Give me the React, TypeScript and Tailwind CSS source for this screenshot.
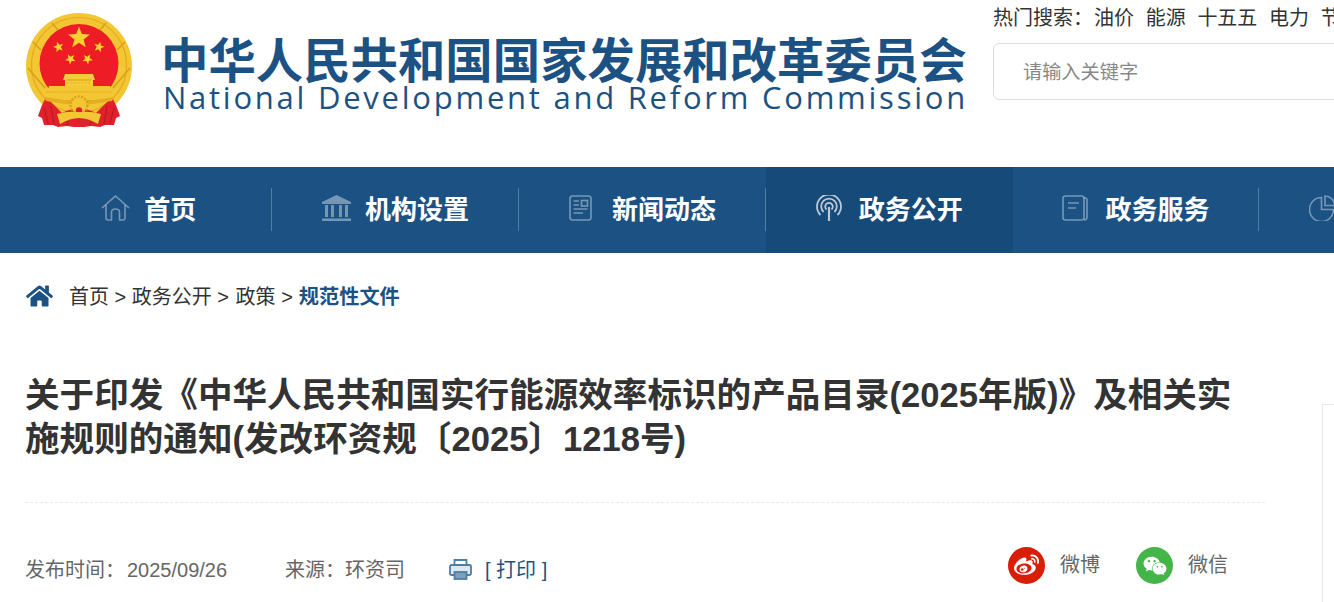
import { FaHome, FaWeibo, FaWeixin } from "react-icons/fa";

const zh = { fontFamily: '"Liberation Sans", "Noto Sans CJK SC", sans-serif' };

// 国徽, drawn in page coordinates
function star(cx: number, cy: number, r: number, rot = 0) {
  const pts: string[] = [];
  for (let i = 0; i < 10; i++) {
    const a = ((-90 + rot + i * 36) * Math.PI) / 180;
    const rr = i % 2 === 0 ? r : r * 0.42;
    pts.push(`${(cx + rr * Math.cos(a)).toFixed(2)},${(cy + rr * Math.sin(a)).toFixed(2)}`);
  }
  return pts.join(" ");
}

function Emblem() {
  return (
    <svg viewBox="26 13 108 116" className="w-[108px] h-[116px] shrink-0">
      <circle cx="79" cy="66" r="53" fill="#f3c633" />
      <circle cx="79" cy="65" r="47.5" fill="none" stroke="#e3a921" strokeWidth="1.2" />
      <path d="M28 68 L45 88 M130 68 L113 88 M33 42 L41 50 M125 42 L117 50 M52 23 L58 30 M106 23 L100 30" stroke="#dc9f1c" strokeWidth="1.6" fill="none" />
      <circle cx="79" cy="63.5" r="39.5" fill="#ee1c25" />
      {/* 绶带 */}
      <path d="M46 97 Q41 106 38 116 L42 118 L44 125 L53 125 L58 127 L67 126 L74 127 L84 127 L91 126 L100 127 L105 125 L114 125 L116 118 L120 116 Q117 106 112 97 L96 113 Q79 104 62 113 Z" fill="#e0202a" />
      <path d="M44 108 L48 123 M51 106 L54 124 M114 108 L110 123 M107 106 L104 124 M66 117 L68 125 M92 117 L90 125" stroke="#b01520" strokeWidth="0.9" fill="none" />
      <polygon points={star(79, 38, 11.5)} fill="#f8d22e" />
      <polygon points={star(58.5, 47, 5.5, -15)} fill="#f8d22e" />
      <polygon points={star(99, 47, 5.5, 15)} fill="#f8d22e" />
      <polygon points={star(70.5, 59, 5.5, -30)} fill="#f8d22e" />
      <polygon points={star(87.5, 59, 5.5, 30)} fill="#f8d22e" />
      {/* 天安门 */}
      <path d="M65 74 L93 74 L95 80 L93 80 L93 86 L65 86 L65 80 L63 80 Z" fill="#f6cb3a" />
      <path d="M67 80 H91" stroke="#dc9a18" strokeWidth="1" />
      <path d="M67 83 H91" stroke="#dc9a18" strokeWidth="0.6" strokeDasharray="2 1.5" />
      <path d="M49 86 H110 L112 98 Q79 104 46 98 Z" fill="#f3c633" />
      <path d="M46 92 H112" stroke="#e3a921" strokeWidth="0.8" />
      <path d="M44 97 Q79 104 114 97 L112 101 Q79 108 46 101 Z" fill="#e6ad22" />
      {/* 齿轮 */}
      <circle cx="79" cy="105" r="8.5" fill="#f3c633" stroke="#dc9f1c" strokeDasharray="2 1.5" strokeWidth="2.4" />
      <circle cx="79" cy="110.5" r="3.2" fill="#e0202a" />
      <path d="M57 114 Q68 111 75 112 L83 112 Q90 111 101 114 L98 124 Q88 118 79 118 Q70 118 60 124 Z" fill="#f3c633" />
    </svg>
  );
}

function HomeOutline() {
  return (
    <svg viewBox="0 0 29 26" className="w-[29px] h-[26px]" fill="none" stroke="currentColor" strokeWidth="1.6">
      <path d="M1 13 L14.5 1 L28 13" />
      <path d="M5 10 V23 Q5 25 7 25 H10.5 V17 Q10.5 14 14.5 14 Q18.5 14 18.5 17 V25 H22 Q24 25 24 23 V10" />
    </svg>
  );
}

function BankIcon() {
  return (
    <svg viewBox="0 0 29 26" className="w-[29px] h-[26px]" fill="currentColor">
      <path d="M14.5 0 L29 7 V9 H0 V7 Z" />
      <rect x="3" y="10" width="3" height="12" />
      <rect x="9" y="10" width="3" height="12" />
      <rect x="17" y="10" width="3" height="12" />
      <rect x="23" y="10" width="3" height="12" />
      <rect x="0" y="23.5" width="29" height="2.5" />
    </svg>
  );
}

function NewsIcon() {
  return (
    <svg viewBox="0 0 23 26" className="w-[23px] h-[26px]" fill="none" stroke="currentColor" strokeWidth="1.6">
      <rect x="1" y="1" width="21" height="24" rx="2.5" />
      <path d="M4.5 6 H10 M4.5 10 H10 M4.5 14 H18.5 M4.5 18 H14" />
      <rect x="12.5" y="5.5" width="6" height="5.5" />
    </svg>
  );
}

function SignalIcon() {
  return (
    <svg viewBox="0 0 26 26" className="w-[26px] h-[26px]" fill="none" stroke="currentColor" strokeWidth="1.8">
      <path d="M4.5 20 A12 12 0 1 1 21.5 20" />
      <path d="M7.6 17 A7.8 7.8 0 1 1 18.4 17" />
      <path d="M10.5 14.5 A3.8 3.8 0 1 1 15.5 14.5" />
      <path d="M13 12 V26" strokeWidth="2.2" />
    </svg>
  );
}

function ServiceIcon() {
  return (
    <svg viewBox="0 0 26 26" className="w-[26px] h-[26px]" fill="none" stroke="currentColor" strokeWidth="1.6">
      <rect x="1" y="1" width="21" height="24" rx="2.5" />
      <path d="M22 3 H23 Q25 3 25 5 V22 Q25 25 22 25" />
      <path d="M6 8 H17 M6 13 H14" />
    </svg>
  );
}

function PieIcon() {
  return (
    <svg viewBox="0 0 26 26" className="w-[26px] h-[26px]" fill="none" stroke="currentColor" strokeWidth="1.6">
      <path d="M12.5 2.5 A12 12 0 1 0 24.5 14.5 H12.5 Z" />
      <path d="M16 1 A9.5 9.5 0 0 1 25.5 10.5 H16 Z" />
    </svg>
  );
}

const navItems = [
  { label: "首页", icon: <HomeOutline />, gap: "gap-[14px]" },
  { label: "机构设置", icon: <BankIcon />, gap: "gap-[14px]" },
  { label: "新闻动态", icon: <NewsIcon />, gap: "gap-[20px]" },
  { label: "政务公开", icon: <SignalIcon />, gap: "gap-[17px]", active: true },
  { label: "政务服务", icon: <ServiceIcon />, gap: "gap-[17px]" },
  { label: "互动交流", icon: <PieIcon />, gap: "gap-[17px]" },
];

export default function App() {
  return (
    <div className="w-[1334px] h-[602px] overflow-hidden bg-white text-[#333]" style={zh}>
      {/* 头部 */}
      <header className="flex h-[167px] pl-[26px]">
        <div className="pt-[13px]">
          <Emblem />
        </div>
        <div className="ml-[27px] pt-[32px] w-[832px] shrink-0 text-[#1c5283]">
          <div className="text-[47.4px] leading-[52px] font-bold whitespace-nowrap" style={{ fontFamily: '"Noto Sans CJK SC", sans-serif' }}>
            中华人民共和国国家发展和改革委员会
          </div>
          <div className="pl-[2px] text-[31px] leading-[26px] tracking-[2.75px] whitespace-nowrap" style={{ fontFamily: '"Open Sans", sans-serif' }}>
            National Development and Reform Commission
          </div>
        </div>
        <div className="w-[400px] shrink-0">
          <div className="flex gap-[11.7px] h-[43px] pt-[4px] text-[20px] leading-[28px] whitespace-nowrap">
            <span>热门搜索：</span>
            <a className="-ml-[10.7px]">油价</a>
            <a>能源</a>
            <a>十五五</a>
            <a>电力</a>
            <a>节能</a>
          </div>
          <input
            className="block w-[420px] h-[57px] border border-[#ddd] rounded-[6px] pl-[29px] pt-[2px] text-[19.2px] outline-none placeholder:text-[#888]"
            placeholder="请输入关键字"
          />
        </div>
      </header>

      {/* 导航 */}
      <nav className="flex h-[86px] pl-[25.4px] bg-[#1c5283] text-white overflow-hidden">
        {navItems.map((item) => (
          <div
            key={item.label}
            className={`relative w-[246.8px] shrink-0 flex items-center justify-center pb-[4px] ${item.gap} ${item.active ? "bg-[#164a78]" : ""}`}
          >
            <span className={item.active ? "text-white/70" : "text-white/40"}>{item.icon}</span>
            <span className="text-[26px] font-bold leading-[36px]" style={{ fontFamily: '"Noto Sans CJK SC", sans-serif' }}>
              {item.label}
            </span>
            {!item.active && <span className="absolute right-0 top-[21px] h-[43px] w-px bg-white/25" />}
          </div>
        ))}
      </nav>

      {/* 面包屑 */}
      <div className="flex items-center h-[86px] pl-[26px] text-[20px]">
        <FaHome className="text-[#1c5283] w-[27px] h-[24px] mr-[16px]" />
        <span className="pt-[2px]">首页 &gt; 政务公开 &gt; <span className="ml-[1px]">政策</span> &gt; </span>
        <span className="ml-[6px] pt-[2px] text-[20.2px] font-bold text-[#1c5283]">规范性文件</span>
      </div>

      {/* 正文 */}
      <div className="flex pl-[25px]">
        <article className="w-[1240px] shrink-0">
          <h1 className="pt-[34px] pb-[41px] border-b border-dashed border-[#e8e8e8] text-[34.6px] leading-[44px] font-bold text-[#333]">
            关于印发《中华人民共和国实行能源效率标识的产品目录(2025年版)》及相关实施规则的通知(发改环资规〔2025〕1218号)
          </h1>
          <div className="flex items-center h-[125px] text-[20px] text-[#666]">
            <span className="w-[260px] pt-[8px]">发布时间：<span className="ml-[2px]">2025/09/26</span></span>
            <span className="w-[164px] pt-[8px]">来源：环资司</span>
            <span className="flex items-center gap-[13px] pt-[8px] text-[#1c5283]">
              <svg viewBox="0 0 23 21" className="w-[23px] h-[21px] text-[#4d7ea6]" fill="none" stroke="currentColor" strokeWidth="1.8">
                <path d="M5.5 6 V1 H17.5 V6" />
                <path d="M5 16 H2.5 Q1 16 1 14.5 V7.5 Q1 6 2.5 6 H20.5 Q22 6 22 7.5 V14.5 Q22 16 20.5 16 H18" fill="#dfe7ee" />
                <rect x="5.5" y="13" width="12" height="7" fill="#7fa0bc" />
              </svg>
              [ 打印 ]
            </span>
            <span className="ml-auto mr-[1px] flex items-center">
              <span className="w-[37px] h-[37px] rounded-full bg-[#d81e06] flex items-center justify-center text-white">
                <FaWeibo className="w-[25px] h-[25px]" />
              </span>
              <span className="ml-[15px] w-[76px] pb-[2px]">微博</span>
              <span className="w-[37px] h-[37px] rounded-full bg-[#44b549] flex items-center justify-center text-white">
                <FaWeixin className="w-[24px] h-[24px]" />
              </span>
              <span className="ml-[15px] w-[76px] pb-[2px]">微信</span>
            </span>
          </div>
        </article>
        <aside className="ml-[57px] mt-[65px] w-[300px] h-[300px] shrink-0 border border-[#e8e8e8]" />
      </div>
    </div>
  );
}
